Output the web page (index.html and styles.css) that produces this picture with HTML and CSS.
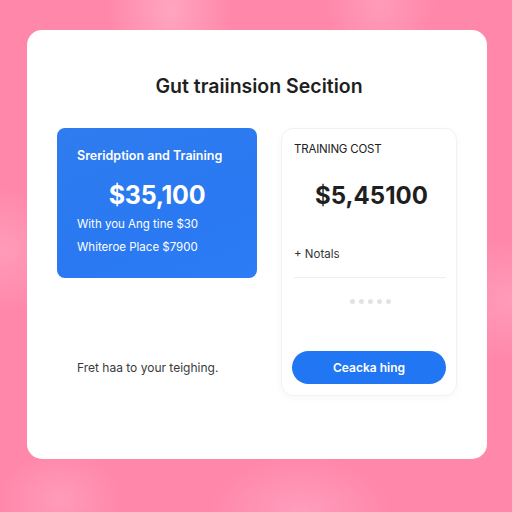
FILE: index.html
```html
<!DOCTYPE html>
<html lang="en">
<head>
<meta charset="utf-8">
<title>Training Section</title>
<link rel="stylesheet" href="styles.css">
</head>
<body>
<main class="panel">
  <h1 class="panel-title">Gut traiinsion Secition</h1>
  <div class="panel-body">
    <div class="left-col">
      <section class="plan-card">
        <h2 class="plan-title">Sreridption and Training</h2>
        <div class="plan-price">$35,100</div>
        <p class="plan-line">With you Ang tine $30</p>
        <p class="plan-line">Whiteroe Place $7900</p>
      </section>
      <p class="note">Fret haa to your teighing.</p>
    </div>
    <aside class="cost-card">
      <div class="cost-label">TRAINING COST</div>
      <div class="cost-price">$5,45100</div>
      <div class="cost-extra">+ Notals</div>
      <hr class="cost-divider">
      <div class="dots"><span></span><span></span><span></span><span></span><span></span></div>
      <button class="cta">Ceacka hing</button>
    </aside>
  </div>
</main>
</body>
</html>
```

FILE: styles.css
```css
* { box-sizing: border-box; }

html, body { height: 100%; }

body {
  margin: 0;
  width: 512px;
  height: 512px;
  overflow: hidden;
  font-family: Inter, "Noto Sans", "Liberation Sans", sans-serif;
  background-color: #ff87aa;
  background-image:
    radial-gradient(ellipse 90px 140px at 170px 10px, rgba(255,190,210,0.55), rgba(255,190,210,0) 70%),
    radial-gradient(ellipse 80px 120px at 380px 0px, rgba(255,180,205,0.45), rgba(255,180,205,0) 70%),
    radial-gradient(ellipse 120px 90px at 0px 250px, rgba(255,175,200,0.5), rgba(255,175,200,0) 70%),
    radial-gradient(ellipse 110px 90px at 512px 300px, rgba(255,175,200,0.5), rgba(255,175,200,0) 70%),
    radial-gradient(ellipse 130px 80px at 300px 512px, rgba(255,175,205,0.55), rgba(255,175,205,0) 70%),
    radial-gradient(ellipse 90px 70px at 60px 500px, rgba(255,180,205,0.45), rgba(255,180,205,0) 70%);
  padding: 30px 25px 53px 27px;
}

.panel {
  width: 460px;
  height: 429px;
  background: #fff;
  border-radius: 15px;
  padding: 44px 30px 0 30px;
}

.panel-title {
  margin: 0;
  text-align: center;
  font-size: 19.5px;
  font-weight: 600;
  color: #1f1f22;
  line-height: 24px;
  padding-left: 4px;
}

.panel-body {
  display: flex;
  gap: 24px;
  margin-top: 30px;
}

.left-col {
  width: 200px;
  display: flex;
  flex-direction: column;
}

.plan-card {
  height: 150px;
  background: linear-gradient(160deg, #2f7cef 0%, #2a79f2 60%, #2b7cf5 100%);
  border-radius: 8px;
  padding: 20px 16px 0 20px;
  color: #fff;
}

.plan-title {
  margin: 0;
  font-size: 12.5px;
  font-weight: 600;
  line-height: 16px;
}

.plan-price {
  text-align: center;
  font-size: 25px;
  font-weight: 700;
  line-height: 30px;
  margin-top: 16px;
  padding-right: 4px;
  letter-spacing: -0.3px;
}

.plan-line {
  margin: 6px 0 0;
  font-size: 11.5px;
  line-height: 16px;
  font-weight: 400;
}

.plan-line + .plan-line { margin-top: 7px; }

.note {
  margin: 82px 0 0 20px;
  font-size: 12px;
  color: #3a3a3a;
  line-height: 16px;
  white-space: nowrap;
}

.cost-card {
  width: 176px;
  height: 268px;
  border: 1px solid #f1f1f3;
  border-radius: 12px;
  box-shadow: 0 2px 8px rgba(0,0,0,0.035);
  padding: 12px 11px 0 10px;
  display: flex;
  flex-direction: column;
}

.cost-label {
  font-size: 11.5px;
  color: #222;
  line-height: 16px;
  letter-spacing: -0.2px;
  padding-left: 2px;
}

.cost-price {
  text-align: center;
  font-size: 24px;
  font-weight: 700;
  color: #1f1f22;
  line-height: 30px;
  margin-top: 24px;
  padding-left: 6px;
}

.cost-extra {
  margin-top: 35px;
  font-size: 11.5px;
  color: #333;
  line-height: 16px;
  padding-left: 2px;
}

.cost-divider {
  border: 0;
  border-top: 1px solid #efeff1;
  margin: 15px 0 0 2px;
  width: 152px;
}

.dots {
  display: flex;
  justify-content: center;
  gap: 4px;
  margin-top: 21px;
  padding-left: 4px;
}

.dots span {
  width: 5px;
  height: 5px;
  border-radius: 50%;
  background: #e3e3e6;
}

.cta {
  margin-top: 47px;
  width: 154px;
  height: 33px;
  border: 0;
  border-radius: 17px;
  background: #2176f3;
  color: #fff;
  font-family: inherit;
  font-size: 12px;
  font-weight: 600;
  align-self: flex-start;
}
```
